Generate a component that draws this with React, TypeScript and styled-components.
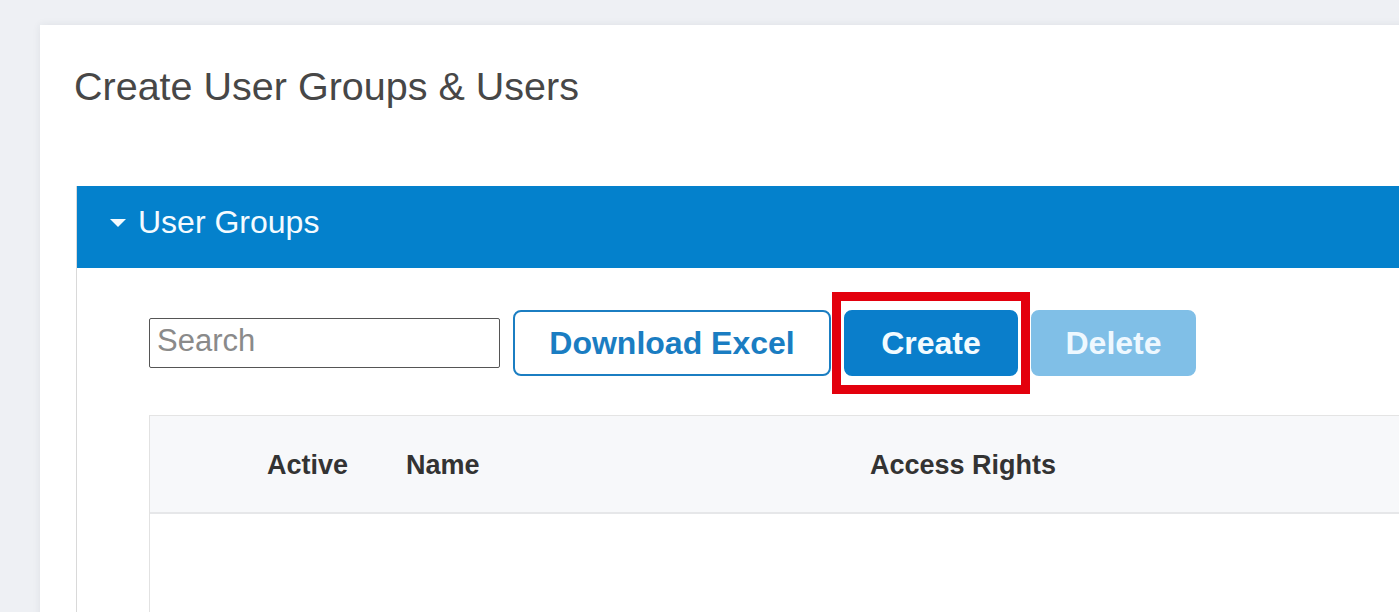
import React from "react";
import styled, { createGlobalStyle } from "styled-components";

const GlobalStyle = createGlobalStyle`
  html, body {
    margin: 0;
    padding: 0;
    background: #eef0f4;
    overflow: hidden;
    font-family: "Liberation Sans", Arial, Helvetica, sans-serif;
  }
  * { box-sizing: border-box; }
`;

const Page = styled.div`
  padding: 25px 0 0 40px;
  height: 612px;
  overflow: hidden;
`;

const Card = styled.div`
  background: #ffffff;
  box-shadow: 0 0 8px rgba(40, 50, 70, 0.08);
  padding: 38px 0 0 36px;
  margin-right: -200px;
  min-height: 800px;
`;

const Title = styled.h1`
  margin: 0;
  font-size: 39.5px;
  font-weight: 300;
  line-height: 46px;
  color: #474747;
  text-indent: -2px;
`;

const Panel = styled.section`
  margin-top: 77px;
  border-left: 1px solid #d9d9d9;
  min-height: 600px;
`;

const PanelHeader = styled.div`
  height: 82px;
  background: #0481cc;
  display: flex;
  align-items: center;
  gap: 12px;
  padding: 0 0 9px 33px;
  color: #f4fbff;
  font-size: 32px;
`;

const Caret = styled.svg`
  width: 16px;
  height: 8px;
  flex: none;
`;

const PanelBody = styled.div`
  padding: 42px 0 0 72px;
`;

const Toolbar = styled.div`
  display: flex;
  align-items: center;
  gap: 13px;
`;

const SearchInput = styled.input`
  width: 351px;
  height: 50px;
  border: 1.5px solid #555555;
  border-radius: 2px;
  padding: 0 0 4px 7px;
  font-family: "Liberation Sans", Arial, sans-serif;
  font-size: 31px;
  color: #333;
  outline: none;
  &::placeholder { color: #8a8a8a; }
`;

const Button = styled.button<{ $variant: "outline" | "primary" | "disabled"; $w: number }>`
  width: ${(p) => p.$w}px;
  height: 66px;
  border-radius: 8px;
  font-family: "Liberation Sans", Arial, sans-serif;
  font-weight: 700;
  font-size: 32px;
  padding: 0;
  cursor: pointer;
  border: 2px solid ${(p) => (p.$variant === "outline" ? "#1b7ec2" : p.$variant === "primary" ? "#0a7ecb" : "#80bfe7")};
  background: ${(p) => (p.$variant === "outline" ? "#ffffff" : p.$variant === "primary" ? "#0a7ecb" : "#80bfe7")};
  color: ${(p) => (p.$variant === "outline" ? "#1a7dc2" : p.$variant === "primary" ? "#f2fbff" : "#eef8ff")};
`;

const Highlight = styled.div`
  position: relative;
  display: flex;
`;

const HighlightFrame = styled.div`
  position: absolute;
  inset: -18px -12px;
  border: 9px solid #e3000d;
  pointer-events: none;
`;

const Table = styled.div`
  margin-top: 39px;
  border-left: 1px solid #e2e2e2;
  border-top: 1px solid #e4e4e4;
  min-height: 400px;
`;

const HeaderRow = styled.div`
  display: grid;
  grid-template-columns: 117px 139px 464px 1fr;
  align-items: center;
  height: 98px;
  background: #f7f8fa;
  border-bottom: 2px solid #e6e7e9;
`;

const HeaderCell = styled.div`
  font-size: 27px;
  font-weight: 700;
  color: #333333;
  padding-top: 2px;
`;

export default function App() {
  return (
    <>
      <GlobalStyle />
      <Page>
        <Card>
          <Title>Create User Groups &amp; Users</Title>
          <Panel>
            <PanelHeader>
              <Caret viewBox="0 0 16 8">
                <polygon points="0,0 16,0 8,8" fill="#f4fbff" />
              </Caret>
              <span>User Groups</span>
            </PanelHeader>
            <PanelBody>
              <Toolbar>
                <SearchInput placeholder="Search" />
                <Button $variant="outline" $w={318}>Download Excel</Button>
                <Highlight>
                  <Button $variant="primary" $w={174}>Create</Button>
                  <HighlightFrame />
                </Highlight>
                <Button $variant="disabled" $w={165}>Delete</Button>
              </Toolbar>
              <Table>
                <HeaderRow>
                  <div />
                  <HeaderCell>Active</HeaderCell>
                  <HeaderCell>Name</HeaderCell>
                  <HeaderCell>Access Rights</HeaderCell>
                </HeaderRow>
              </Table>
            </PanelBody>
          </Panel>
        </Card>
      </Page>
    </>
  );
}
